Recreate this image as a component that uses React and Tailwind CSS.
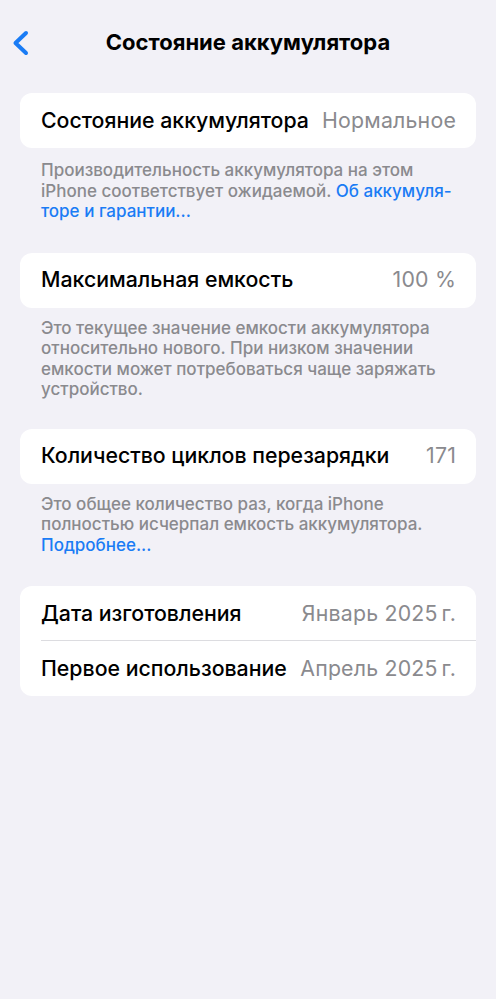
import React from 'react';

const font = { fontFamily: 'Inter, "Noto Sans", sans-serif' };

function Row({ label, value, divider }) {
  return (
    <div className="relative flex h-[55px] items-center justify-between pl-[21px] pr-[20px]">
      <span className="text-[21.3px] font-medium text-black">{label}</span>
      <span className="text-[21.3px] tracking-[0.2px] text-[#8a8a8e]">{value}</span>
      {divider && <div className="absolute bottom-0 left-[21px] right-0 h-px bg-[#dcdce0]" />}
    </div>
  );
}

function Card({ children }) {
  return <div className="mx-[20px] overflow-hidden rounded-[12px] bg-white">{children}</div>;
}

function Footer({ children, className }) {
  return (
    <p className={'px-[41px] text-[17px] leading-[20.5px] font-medium whitespace-nowrap text-[#8a8a8e] ' + (className || '')}>
      {children}
    </p>
  );
}

export default function App() {
  return (
    <div className="min-h-[999px] w-full bg-[#f2f1f7]" style={font}>
      <div className="relative flex h-[64px] justify-center">
        <svg className="absolute left-[11px] top-[30px]" width="19" height="26" viewBox="0 0 19 26" fill="none">
          <path d="M15 3 L4.5 13 L15 23" stroke="#1a7cf5" strokeWidth="4" strokeLinecap="round" strokeLinejoin="round" />
        </svg>
        <h1 className="mt-[28px] text-[22px] leading-[28px] font-bold text-black">Состояние аккумулятора</h1>
      </div>

      <div className="pt-[29px]">
        <Card>
          <Row label="Состояние аккумулятора" value="Нормальное" />
        </Card>
        <Footer className="mt-[12px]">
          Производительность аккумулятора на этом
          <br />
          iPhone соответствует ожидаемой. <span className="text-[#1a7cf5]">Об аккумуля-</span>
          <br />
          <span className="text-[#1a7cf5]">торе и гарантии...</span>
        </Footer>

        <div className="mt-[31px]">
          <Card>
            <Row label="Максимальная емкость" value="100 %" />
          </Card>
        </div>
        <Footer className="mt-[10px]">
          Это текущее значение емкости аккумулятора
          <br />
          относительно нового. При низком значении
          <br />
          емкости может потребоваться чаще заряжать
          <br />
          устройство.
        </Footer>

        <div className="mt-[29px]">
          <Card>
            <Row label="Количество циклов перезарядки" value="171" />
          </Card>
        </div>
        <Footer className="mt-[10px]">
          Это общее количество раз, когда iPhone
          <br />
          полностью исчерпал емкость аккумулятора.
          <br />
          <span className="text-[#1a7cf5]">Подробнее...</span>
        </Footer>

        <div className="mt-[31px]">
          <Card>
            <Row label="Дата изготовления" value={'Январь 2025\u202Fг.'} divider />
            <Row label="Первое использование" value={'Апрель 2025\u202Fг.'} />
          </Card>
        </div>
      </div>
    </div>
  );
}
